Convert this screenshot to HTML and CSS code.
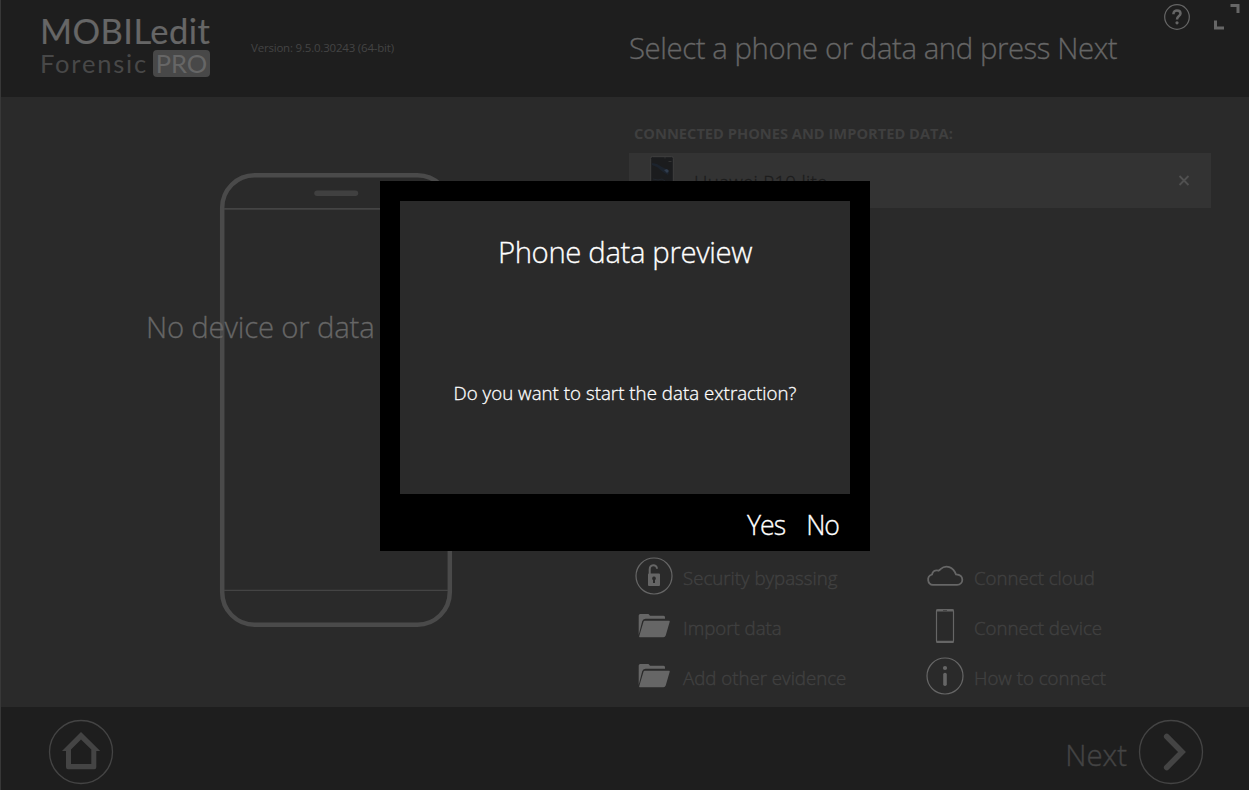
FILE: index.html
```html
<!DOCTYPE html>
<html lang="en">
<head>
<meta charset="utf-8">
<title>MOBILedit Forensic PRO</title>
<link rel="stylesheet" href="styles.css">
</head>
<body>
<div class="app">
  <header class="top">
    <div class="logo">
      <div class="logo-name">MOBILedit</div>
      <div class="logo-sub"><span class="logo-forensic">Forensic</span><span class="logo-pro">PRO</span></div>
    </div>
    <div class="version">Version: 9.5.0.30243 (64-bit)</div>
    <h1 class="title">Select a phone or data and press Next</h1>
    <div class="tools">
      <svg class="help" width="28" height="28" viewBox="0 0 28 28" fill="none" stroke="#666">
        <circle cx="14" cy="14" r="12.3" stroke-width="1.2"/>
        <path d="M10.5 11.2V10.6C10.5 6.4 17.5 6.6 17.5 10.6C17.5 13.2 14 12.9 14 16.4" stroke-width="2.5"/>
        <circle cx="14" cy="19.8" r="1.6" fill="#666" stroke="none"/>
      </svg>
      <svg class="expand" width="27" height="27" viewBox="0 0 27 27" fill="none" stroke="#666" stroke-width="3">
        <path d="M17.5 2.5H25V10M2.5 17.5V25H11"/>
      </svg>
    </div>
  </header>

  <main class="main">
    <section class="preview">
      <svg class="phone" width="234" height="456" viewBox="0 0 234 456" fill="none" stroke="#4a4a4a">
        <rect x="3.2" y="3.2" width="227.6" height="449.6" rx="32.5" stroke-width="4.5"/>
        <path d="M5 36.8H229" stroke="#444" stroke-width="1.7"/>
        <path d="M5 418.3H229" stroke="#444" stroke-width="1.3"/>
        <path d="M98 21.3H136.5" stroke="#404040" stroke-width="5.4" stroke-linecap="round"/>
      </svg>
      <div class="empty">No device or data</div>
    </section>

    <section class="side">
      <h2 class="list-head">CONNECTED PHONES AND IMPORTED DATA:</h2>
      <div class="device">
        <svg class="thumb" width="24" height="48" viewBox="0 0 24 48">
          <rect x=".7" y=".7" width="22.6" height="46.6" rx="1.5" fill="#1b1c1e" stroke="#3f3f3f"/>
          <path d="M2 7l5 1 5 3 4 2 3 3-1 3-5-3-6-5-5-2z" fill="#1c232d"/>
          <path d="M14 14l3-1 2 2-2 2z" fill="#303d4e"/>
          <path d="M3 23l5 1 4-1 3 2" stroke="#20252c" fill="none"/>
          <path d="M18.5 5.5h3M15 1v1.5" stroke="#333" fill="none"/>
        </svg>
        <span class="device-name">Huawei P10 lite</span>
        <svg class="close" width="12" height="12" viewBox="0 0 12 12" fill="none" stroke="#505050" stroke-width="1.9"><path d="M1.5 1l9 9M10.5 1l-9 9"/></svg>
      </div>
      <div class="actions">
        <div class="action">
          <span class="icon"><svg width="38" height="38" viewBox="0 0 38 38" fill="none" stroke="#666">
            <circle cx="19" cy="19" r="18" stroke-width="1.2"/>
            <path d="M14.7 17V12.5C14.7 7 21.8 7 22 11.8" stroke-width="2"/>
            <path fill="#666" stroke="none" fill-rule="evenodd" d="M14 16.5H24a1 1 0 0 1 1 1V28a1 1 0 0 1-1 1H14a1 1 0 0 1-1-1V17.5a1 1 0 0 1 1-1zM19 19.5a1.9 1.9 0 0 0-1 3.5V26h2V23a1.9 1.9 0 0 0-1-3.5z"/>
          </svg></span><span>Security bypassing</span>
        </div>
        <div class="action">
          <span class="icon"><svg width="38" height="24" viewBox="0 0 38 24" fill="none" stroke="#666" stroke-width="1.8">
            <path d="M7 20.9H31C38 20.4 38.5 11 30 10.4C27.5 3 20 0 14.5 5.2L12.5 6.7C9 5.7 6.5 7.5 6 10.5C0 12.5 1.5 20.5 7 20.9Z"/>
          </svg></span><span>Connect cloud</span>
        </div>
        <div class="action">
          <span class="icon"><svg class="folder" width="32" height="26" viewBox="0 0 32 26" fill="#666">
            <path d="M.7 22V2.5A1.5 1.5 0 0 1 2.2 1H10.5L12 2.8H25.5A1.5 1.5 0 0 1 27 4.5V5.8H7.5A3.5 3.5 0 0 0 4.2 8.3Z"/>
            <path d="M6.8 7.8H31A.7.7 0 0 1 31.7 8.7L27.7 22.5A2.5 2.5 0 0 1 25.4 24.3H2A.8.8 0 0 1 1.2 23.2L5.5 8.8A1.4 1.4 0 0 1 6.8 7.8Z"/>
          </svg></span><span>Import data</span>
        </div>
        <div class="action">
          <span class="icon"><svg width="20" height="36" viewBox="0 0 20 36" fill="none" stroke="#666">
            <rect x="1.5" y="1.5" width="17" height="33" rx="1.8" stroke-width="1.2"/>
            <path d="M1.5 2.3H18.5M1.5 33.8H18.5" stroke-width="2.2"/><path d="M8 2.6H12" stroke="#444"/>
          </svg></span><span>Connect device</span>
        </div>
        <div class="action">
          <span class="icon"><svg class="folder" width="32" height="26" viewBox="0 0 32 26" fill="#666">
            <path d="M.7 22V2.5A1.5 1.5 0 0 1 2.2 1H10.5L12 2.8H25.5A1.5 1.5 0 0 1 27 4.5V5.8H7.5A3.5 3.5 0 0 0 4.2 8.3Z"/>
            <path d="M6.8 7.8H31A.7.7 0 0 1 31.7 8.7L27.7 22.5A2.5 2.5 0 0 1 25.4 24.3H2A.8.8 0 0 1 1.2 23.2L5.5 8.8A1.4 1.4 0 0 1 6.8 7.8Z"/>
          </svg></span><span>Add other evidence</span>
        </div>
        <div class="action">
          <span class="icon"><svg width="38" height="38" viewBox="0 0 38 38" fill="none" stroke="#666">
            <circle cx="19" cy="19" r="18" stroke-width="1.2"/>
            <circle cx="19" cy="11" r="2.1" fill="#666" stroke="none"/>
            <path d="M19 17.5V27.2" stroke-width="3.6" stroke-linecap="round"/>
          </svg></span><span>How to connect</span>
        </div>
      </div>
    </section>
  </main>

  <footer class="bottom">
    <svg width="66" height="66" viewBox="0 0 66 66" fill="none" stroke="#444">
      <circle cx="33" cy="33" r="31.5" stroke-width="1.3"/>
      <path fill="#444" stroke="none" fill-rule="evenodd" d="M33 13L52.2 32H48.3V48.2A2 2 0 0 1 46.3 50.2H20A2 2 0 0 1 18 48.2V32H14ZM33 20.5L23 30.5V45H43.3V30.5Z"/>
    </svg>
    <div class="next"><span>Next</span>
      <svg width="66" height="66" viewBox="0 0 66 66" fill="none" stroke="#444">
        <circle cx="33" cy="33" r="31.5" stroke-width="1.3"/>
        <path d="M28.7 17.5L44 33L28.7 48.5" stroke-width="5.6" stroke-linecap="round"/>
      </svg>
    </div>
  </footer>

  <div class="dialog">
    <div class="dialog-body">
      <div class="dialog-title">Phone data preview</div>
      <div class="dialog-text">Do you want to start the data extraction?</div>
    </div>
    <div class="dialog-actions"><span>Yes</span><span>No</span></div>
  </div>
</div>
</body>
</html>
```
FILE: styles.css
```css
* { box-sizing: border-box; }
body { margin: 0; background: #2a2a2a; font-family: "Open Sans", "Noto Sans", sans-serif; font-weight: 300; }
h1, h2 { margin: 0; font-weight: inherit; }
svg { display: block; flex: none; }
.app { position: relative; width: 1249px; height: 790px; display: flex; flex-direction: column; border-left: 1px solid #383838; overflow: hidden; white-space: nowrap; }

.top { flex: none; height: 97px; display: flex; align-items: flex-start; background: #1e1e1e; color: #666; }
.logo { width: 210px; padding: 13px 0 0 38px; font-family: Lato, sans-serif; font-weight: 400; }
.logo-name { height: 37px; padding-left: 1px; line-height: 35px; font-size: 34.5px; letter-spacing: .45px; color: #666; -webkit-text-stroke: .2px #666; }
.logo-sub { display: flex; align-items: center; height: 27px; }
.logo-forensic { width: 114px; padding-left: 1px; font-size: 25.5px; line-height: 27px; letter-spacing: 1.8px; color: #484848; }
.logo-pro { width: 57px; height: 27px; border-radius: 4px; background: #484848; color: #666; font-size: 25.5px; line-height: 27px; text-align: center; }
.version { width: 418px; padding: 38px 0 0 40px; font-size: 11.5px; line-height: 20px; font-weight: 400; letter-spacing: -.2px; color: #444; }
.title { width: 534px; padding-top: 28px; font-size: 29.33px; line-height: 40px; letter-spacing: -.43px; -webkit-text-stroke: .3px #666; }
.tools { display: flex; gap: 22px; padding-top: 3px; }

.main { flex: 1; display: grid; grid-template-columns: 628px 582px; }
.preview { position: relative; padding: 75px 0 0 218px; }
.empty { position: absolute; left: 145px; top: 210px; font-size: 29.33px; line-height: 40px; letter-spacing: -.2px; color: #666; -webkit-text-stroke: .3px #666; }
.side { display: flex; flex-direction: column; }
.list-head { height: 56px; padding: 26px 0 0 5px; font-size: 14.67px; line-height: 20px; font-weight: 700; color: #3f3f3f; }
.device { display: flex; align-items: center; height: 55px; padding: 0 21px; background: #333; }
.thumb { margin-top: -2px; }
.device-name { flex: 1; margin-left: 20px; padding-top: 2px; font-size: 18.67px; letter-spacing: .3px; color: #1c1c1c; -webkit-text-stroke: .3px #1c1c1c; }
.actions { display: grid; grid-template-columns: 291px 291px; grid-auto-rows: 50px; margin-top: auto; margin-bottom: 6px; }
.action { display: flex; align-items: center; gap: 4px; font-size: 18.67px; line-height: 30px; color: #404040; }
.action > span:last-child { padding-top: 4px; -webkit-text-stroke: .4px #404040; }
.icon { width: 50px; display: flex; justify-content: center; }

.bottom { flex: none; height: 83px; display: flex; align-items: center; justify-content: space-between; padding: 6px 45px 0 47px; background: #1e1e1e; color: #444; }
.next { display: flex; align-items: center; gap: 11px; font-size: 29.33px; line-height: 40px; -webkit-text-stroke: .4px #444; }
.next span { padding-top: 6px; }

.dialog { position: absolute; left: 379px; top: 181px; width: 490px; height: 370px; padding: 20px 20px 0; background: #000; color: #fff; }
.dialog-body { height: 293px; padding-top: 31px; background: #2a2a2a; text-align: center; }
.dialog-title { font-size: 29.33px; line-height: 40px; letter-spacing: -.38px; -webkit-text-stroke: .3px #fff; }
.dialog-text { margin-top: 106px; font-size: 18.67px; line-height: 30px; letter-spacing: .04px; -webkit-text-stroke: .3px #fff; }
.dialog-actions { display: flex; justify-content: flex-end; gap: 21px; padding: 11px 11px 0 0; font-size: 26.67px; line-height: 40px; letter-spacing: -1px; -webkit-text-stroke: .3px #fff; }
```
